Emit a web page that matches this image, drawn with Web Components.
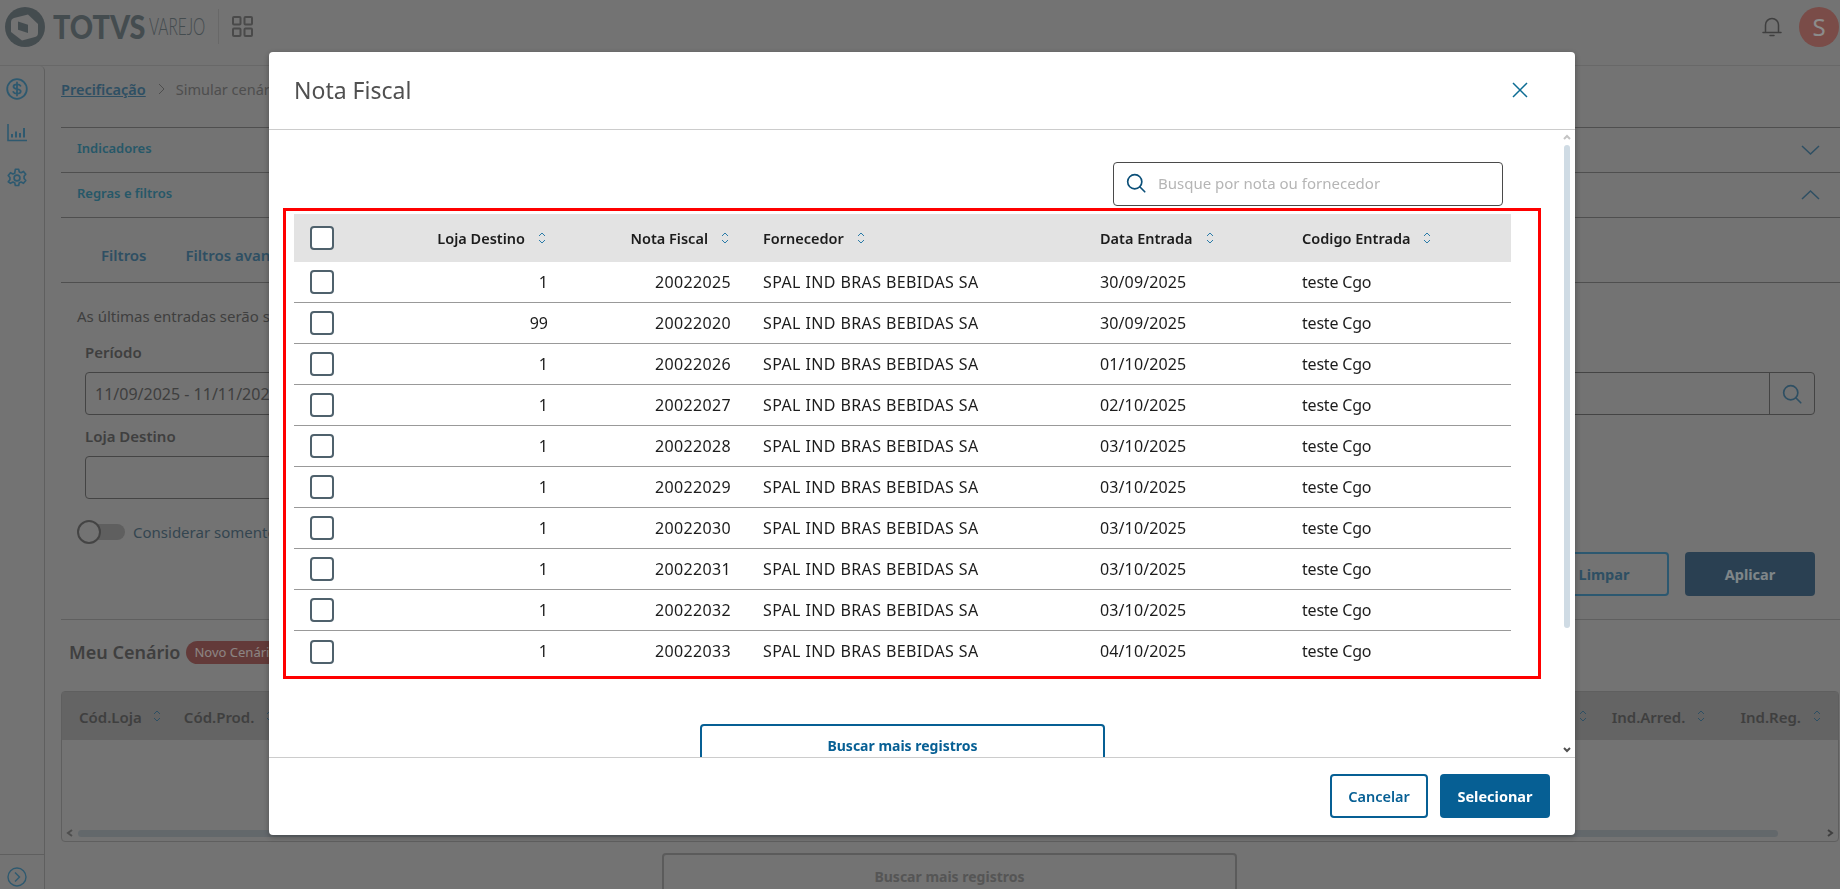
<!DOCTYPE html>
<html lang="pt-BR">
<head>
<meta charset="utf-8">
<title>Nota Fiscal</title>
<style>
  html, body { margin: 0; height: 100%; overflow: hidden; }
  body { background: #d1d1d1; color: #747474; font-family: "Noto Sans", "Liberation Sans", sans-serif; font-size: 14px; }
  app-page { height: 889px; }
</style>
</head>
<body>
<app-page>
  <app-header slot="header"></app-header>
  <app-sidebar slot="side"></app-sidebar>
  <bread-crumb></bread-crumb>
  <accordion-row label="Indicadores"></accordion-row>
  <accordion-row label="Regras e filtros" open></accordion-row>
  <filter-panel></filter-panel>
  <scenario-section></scenario-section>
</app-page>
<modal-overlay></modal-overlay>
<modal-dialog heading="Nota Fiscal">
  <search-box placeholder="Busque por nota ou fornecedor"></search-box>
  <nf-table>
    <nf-row loja="1" nota="20022025" forn="SPAL IND BRAS BEBIDAS SA" data="30/09/2025" cod="teste Cgo"></nf-row>
    <nf-row loja="99" nota="20022020" forn="SPAL IND BRAS BEBIDAS SA" data="30/09/2025" cod="teste Cgo"></nf-row>
    <nf-row loja="1" nota="20022026" forn="SPAL IND BRAS BEBIDAS SA" data="01/10/2025" cod="teste Cgo"></nf-row>
    <nf-row loja="1" nota="20022027" forn="SPAL IND BRAS BEBIDAS SA" data="02/10/2025" cod="teste Cgo"></nf-row>
    <nf-row loja="1" nota="20022028" forn="SPAL IND BRAS BEBIDAS SA" data="03/10/2025" cod="teste Cgo"></nf-row>
    <nf-row loja="1" nota="20022029" forn="SPAL IND BRAS BEBIDAS SA" data="03/10/2025" cod="teste Cgo"></nf-row>
    <nf-row loja="1" nota="20022030" forn="SPAL IND BRAS BEBIDAS SA" data="03/10/2025" cod="teste Cgo"></nf-row>
    <nf-row loja="1" nota="20022031" forn="SPAL IND BRAS BEBIDAS SA" data="03/10/2025" cod="teste Cgo"></nf-row>
    <nf-row loja="1" nota="20022032" forn="SPAL IND BRAS BEBIDAS SA" data="03/10/2025" cod="teste Cgo"></nf-row>
    <nf-row loja="1" nota="20022033" forn="SPAL IND BRAS BEBIDAS SA" data="04/10/2025" cod="teste Cgo" last></nf-row>
  </nf-table>
</modal-dialog>

<script>
// icones usados em mais de um componente
const sortIcon = (color) => `<svg width="8" height="14" viewBox="0 0 8 14" fill="none" stroke="${color}" stroke-width="1" style="flex:none"><path d="M1 5 4 2l3 3M1 9l3 3 3-3"/></svg>`;
const lupa = (color, size) => `<svg width="${size}" height="${size}" viewBox="0 0 24 24" fill="none" stroke="${color}" stroke-width="2"><circle cx="10.5" cy="10.5" r="8.5"/><path d="m16.5 16.5 6 6" stroke-linecap="round"/></svg>`;

class AppPage extends HTMLElement {
  constructor(){
    super();
    this.attachShadow({mode: 'open'});
    this.shadowRoot.innerHTML = `
      <style>
        :host{ display:flex; flex-direction:column; overflow:hidden; }
        .body{ display:flex; flex:1; min-height:0; }
        main{ flex:1; min-width:0; padding-left:16px; }
      </style>
      <slot name="header"></slot>
      <div class="body">
        <slot name="side"></slot>
        <main><slot></slot></main>
      </div>`;
  }
}

class AppHeader extends HTMLElement {
  constructor(){
    super();
    this.attachShadow({mode: 'open'});
    this.shadowRoot.innerHTML = `
      <style>
        :host{ display:flex; align-items:center; height:66px; box-sizing:border-box; padding-bottom:12px; border-bottom:1px solid #bdbdbd; flex:none; }
        .logo{ margin-left:5px; flex:none; }
        .totvs{ margin-left:8px; width:88px; white-space:nowrap; font:900 32px/1 Lato, sans-serif; color:#7d8a91; transform:scaleX(.9); transform-origin:left center; }
        .varejo{ margin-left:8px; width:57px; white-space:nowrap; font:300 23px/1 Lato, sans-serif; color:#7d8a91; transform:scaleX(.67); transform-origin:left center; }
        .div{ width:1px; height:35px; background:#bdbdbd; margin-left:12px; }
        .grid{ margin-left:13px; }
        .right{ margin-left:auto; display:flex; align-items:center; gap:17px; padding-right:1px; }
        .avatar{ width:40px; height:40px; border-radius:50%; background:#de8a83; color:#fff; font-size:24px; display:flex; align-items:center; justify-content:center; }
      </style>
      <svg class="logo" width="40" height="40" viewBox="0 0 40 40">
        <circle cx="20" cy="20" r="20" fill="#7d8a91"/>
        <path d="M6 25V15q0-3 3-4l14-3.500 10 9.500v9q0 3-3 4l-13 3.500z" fill="#d1d1d1"/>
        <path d="M13 14.500 23 17.700V26L13 22.700z" fill="#7d8a91"/>
      </svg>
      <span class="totvs">TOTVS</span>
      <span class="varejo">VAREJO</span>
      <span class="div"></span>
      <svg class="grid" width="21" height="21" viewBox="0 0 21 21" fill="none" stroke="#878787" stroke-width="2"><rect x="1" y="1" width="7.500" height="7.500" rx="1"/><rect x="12.500" y="1" width="7.500" height="7.500" rx="1"/><rect x="1" y="12.500" width="7.500" height="7.500" rx="1"/><rect x="12.500" y="12.500" width="7.500" height="7.500" rx="1"/></svg>
      <div class="right">
        <svg width="20" height="21" viewBox="0 0 20 21" fill="none" stroke="#747474" stroke-width="1.500"><path d="M1 16.500h18M3.500 16.500V9a6.500 6.500 0 0 1 13 0v7.500M8 19.500h4" stroke-linecap="round"/></svg>
        <div class="avatar">S</div>
      </div>`;
  }
}

class AppSidebar extends HTMLElement {
  constructor(){
    super();
    this.attachShadow({mode: 'open'});
    this.shadowRoot.innerHTML = `
      <style>
        :host{ display:flex; flex-direction:column; align-items:center; width:45px; padding-right:11px; box-sizing:border-box; height:823px; flex:none; border-right:1px solid #adadad; border-top-right-radius:5px; }
        svg{ display:block; flex:none; }
        .a{ margin-top:12px; } .b{ margin-top:24px; } .c{ margin-top:26px; }
        .foot{ margin-top:auto; align-self:stretch; margin-right:-11px; padding:9px 11px 0 0; height:35px; box-sizing:border-box; border-top:1px solid #adadad; display:flex; justify-content:center; align-items:center; }
      </style>
      <svg class="a" width="22" height="22" viewBox="0 0 22 22" fill="none" stroke="#55a3cb" stroke-width="1.800"><circle cx="11" cy="11" r="9.800"/><path d="M14.500 7.800c-.5-1-1.800-1.500-3.500-1.500-2 0-3.500.9-3.500 2.400 0 3.300 7.200 1.400 7.200 4.600 0 1.500-1.500 2.400-3.700 2.400-1.800 0-3.200-.7-3.700-1.800M11 4.500v13" stroke-linecap="round"/></svg>
      <svg class="b" width="20" height="18" viewBox="0 0 20 18" fill="none" stroke="#55a3cb" stroke-width="1.600"><path d="M1 0v16.500h19"/><path d="M5 10v3.500M9 7.500v6M13 9v4.500M17 4v9.500" stroke-width="2"/></svg>
      <svg class="c" width="20" height="20" viewBox="0 0 24 24" fill="none" stroke="#55a3cb" stroke-width="2" stroke-linejoin="round"><circle cx="12" cy="12" r="3.500"/><path d="M10 1.500h4l.7 3.200 2.200 1 2.900-1.600 2.700 3.400-2 2.500v2.500l2 2.500-2.700 3.400-2.900-1.600-2.200 1-.7 3.200h-4l-.7-3.200-2.200-1-2.900 1.600L1.500 16.500l2-2.500v-2.500l-2-2.500 2.700-3.400 2.900 1.600 2.200-1z"/></svg>
      <div class="foot">
        <svg width="20" height="20" viewBox="0 0 20 20" fill="none" stroke="#55a3cb" stroke-width="1.400"><circle cx="10" cy="10" r="9"/><path d="m8 5.500 4.500 4.500L8 14.500"/></svg>
      </div>`;
  }
}

class BreadCrumb extends HTMLElement {
  constructor(){
    super();
    this.attachShadow({mode: 'open'});
    this.shadowRoot.innerHTML = `
      <style>
        :host{ display:flex; align-items:center; height:61px; font-size:14.500px; padding-bottom:16px; box-sizing:border-box; }
        a{ color:#5590b4; text-decoration:underline; font-weight:600; }
        svg{ margin:0 10px 0 12px; }
        span{ color:#8e8e8e; }
      </style>
      <a>Precificação</a>
      <svg width="8" height="12" viewBox="0 0 8 12" fill="none" stroke="#8e8e8e"><path d="m1 1 5 5-5 5"/></svg>
      <span>Simular cenário</span>`;
  }
}

class AccordionRow extends HTMLElement {
  constructor(){
    super();
    this.attachShadow({mode: 'open'});
  }
  connectedCallback(){
    const chevron = this.hasAttribute('open') ? 'M1 10 9.500 2 18 10' : 'M1 2l8.500 8L18 2';
    this.shadowRoot.innerHTML = `
      <style>
        :host{ display:flex; align-items:center; justify-content:space-between; height:45px; box-sizing:border-box; border-top:1px solid #919191; padding:0 20px 0 16px; }
        span{ color:#46a0be; font-size:13px; font-weight:600; margin-bottom:5px; }
      </style>
      <span>${this.getAttribute('label')}</span>
      <svg width="19" height="12" viewBox="0 0 19 12" fill="none" stroke="#5590b4" stroke-width="1.500"><path d="${chevron}"/></svg>`;
  }
}

class FilterPanel extends HTMLElement {
  constructor(){
    super();
    this.attachShadow({mode: 'open'});
    this.shadowRoot.innerHTML = `
      <style>
        :host{ display:block; border-top:1px solid #919191; height:403px; box-sizing:border-box; border-bottom:1px solid #adadad; }
        .tabs{ display:flex; height:65px; box-sizing:border-box; border-bottom:1px solid #919191; padding:9px 0 0 40px; gap:39px; align-items:center; color:#5590b4; font-size:15px; font-weight:600; }
        .hint{ margin:23px 0 0 16px; line-height:20px; font-size:15px; color:#747474; }
        .form{ padding:0 25px 0 24px; }
        label{ display:block; margin-top:16px; height:20px; line-height:20px; font-weight:600; font-size:15px; color:#747474; }
        .row + label{ margin-top:11px; }
        .row{ display:flex; gap:20px; margin-top:10px; }
        .field{ height:43px; box-sizing:border-box; border:1px solid #7d7d7d; border-radius:4px; width:620px; display:flex; align-items:center; padding-left:9px; font-size:16px; color:#747474; }
        .field.r{ flex:1; width:auto; padding:0; justify-content:flex-end; }
        .field.r div{ width:44px; height:100%; border-left:1px solid #7d7d7d; display:flex; align-items:center; justify-content:center; }
        .toggle{ display:flex; align-items:center; margin:21px 0 0 16px; height:24px; color:#5f7f93; font-size:15px; }
        .track{ width:48px; height:24px; position:relative; margin-right:8px; }
        .track::before{ content:""; position:absolute; left:13px; right:0; top:4px; bottom:4px; border-radius:8px; background:#adadad; }
        .track::after{ content:""; position:absolute; left:0; top:0; width:24px; height:24px; box-sizing:border-box; border:2px solid #7d7d7d; border-radius:50%; background:#d1d1d1; }
        .btns{ display:flex; justify-content:flex-end; gap:16px; padding-right:25px; margin-top:8px; }
        .btn{ width:130px; height:44px; box-sizing:border-box; border-radius:4px; display:flex; align-items:center; justify-content:center; font-size:14.500px; font-weight:700; }
        .o{ border:2px solid #50a0cc; color:#5590b4; }
        .f{ background:#4e7695; color:#e8f4fa; }
      </style>
      <div class="tabs"><span>Filtros</span><span>Filtros avançados</span></div>
      <div class="hint">As últimas entradas serão s</div>
      <div class="form">
        <label>Período</label>
        <div class="row">
          <div class="field">11/09/2025 - 11/11/2025</div>
          <div class="field r"><div>${lupa('#5590b4', 20)}</div></div>
        </div>
        <label>Loja Destino</label>
        <div class="row"><div class="field"></div></div>
      </div>
      <div class="toggle"><span class="track"></span>Considerar somente</div>
      <div class="btns"><div class="btn o">Limpar</div><div class="btn f">Aplicar</div></div>`;
  }
}

class ScenarioSection extends HTMLElement {
  constructor(){
    super();
    this.attachShadow({mode: 'open'});
    const s = sortIcon('#5590b4');
    this.shadowRoot.innerHTML = `
      <style>
        :host{ display:block; }
        .title{ display:flex; align-items:center; height:71px; box-sizing:border-box; padding:0 0 7px 8px; }
        h2{ margin:0; font-size:18px; font-weight:600; color:#747474; }
        .badge{ margin-left:6px; height:23px; padding:0 14px 0 8px; border-radius:12px; background:#b46b68; color:#fff0ee; font-size:13px; line-height:23px; }
        .table{ border:1px solid #adadad; border-radius:4px; height:151px; box-sizing:border-box; position:relative; margin-right:1px; }
        .head{ height:48px; background:#b6b6b6; display:flex; align-items:center; font-size:15px; font-weight:600; color:#747474; padding-top:1px; box-sizing:border-box; }
        .bar{ position:absolute; left:0; right:0; bottom:4px; height:8px; display:flex; align-items:center; }
        .thumb{ margin-left:16px; height:7px; width:1700px; border-radius:4px; background:#b4bdc4; }
        .arrow{ position:absolute; top:0; width:8px; height:8px; }
        .btn{ margin:11px 0 0 601px; width:575px; height:48px; box-sizing:border-box; border:2px solid #a6a6a6; border-radius:4px; display:flex; align-items:center; justify-content:center; color:#9c9c9c; font-weight:700; font-size:14px; padding-bottom:2px; }
      </style>
      <div class="title"><h2>Meu Cenário</h2><span class="badge">Novo Cenário</span></div>
      <div class="table">
        <div class="head">
          <span style="margin-left:17px">Cód.Loja</span><span style="margin-left:11px">${s}</span>
          <span style="margin-left:23px">Cód.Prod.</span><span style="margin-left:12px">${s}</span>
          <span style="margin:0 25px 0 auto">${s}</span>
          <span style="margin-right:12px">Ind.Arred.</span><span style="margin-right:35px">${s}</span>
          <span style="margin-right:12px">Ind.Reg.</span><span style="margin-right:17px">${s}</span>
        </div>
        <div class="bar">
          <svg class="arrow" style="left:4px" viewBox="0 0 8 8" fill="none" stroke="#8e8e8e" stroke-width="2"><path d="M6 1 2 4l4 3"/></svg>
          <div class="thumb"></div>
          <svg class="arrow" style="right:4px" viewBox="0 0 8 8" fill="none" stroke="#747474" stroke-width="2"><path d="m2 1 4 3-4 3"/></svg>
        </div>
      </div>
      <div class="btn">Buscar mais registros</div>`;
  }
}

class ModalOverlay extends HTMLElement {
  constructor(){
    super();
    this.attachShadow({mode: 'open'});
    this.shadowRoot.innerHTML = `<style>:host{ position:fixed; inset:0; background:rgba(0,0,0,.45); }</style>`;
  }
}

class ModalDialog extends HTMLElement {
  constructor(){
    super();
    this.attachShadow({mode: 'open'});
  }
  connectedCallback(){
    this.shadowRoot.innerHTML = `
      <style>
        :host{ position:fixed; left:269px; top:52px; width:1306px; height:783px; background:#fff; border-radius:4px; box-shadow:0 2px 6px rgba(0,0,0,.3); display:flex; flex-direction:column; color:#1c1c1c; overflow:hidden; }
        header{ height:78px; flex:none; box-sizing:border-box; border-bottom:1px solid #ccc; display:flex; align-items:center; justify-content:space-between; padding:0 47px 2px 25px; }
        h1{ margin:0; font-size:23px; font-weight:400; color:#505050; }
        .content{ flex:1; min-height:0; overflow:hidden; padding:32px 0 0 14px; position:relative; }
        .btn-more{ margin:45px 0 0 417px; width:405px; height:48px; box-sizing:border-box; border:2px solid #065f94; border-radius:4px; display:flex; align-items:center; justify-content:center; font-size:14px; font-weight:700; color:#065f94; padding-bottom:6px; }
        .track{ position:absolute; right:5px; top:0; bottom:0; width:6px; }
        .thumb{ position:absolute; left:0; right:0; top:15px; height:483px; background:#cfdbe4; border-radius:3px; }
        .track svg{ position:absolute; left:-1px; }
        footer{ height:78px; flex:none; box-sizing:border-box; border-top:1px solid #ccc; display:flex; align-items:center; justify-content:flex-end; gap:12px; padding:0 25px 2px 0; }
        .btn{ height:44px; box-sizing:border-box; border-radius:4px; display:flex; align-items:center; justify-content:center; font-size:14.500px; }
        .cancel{ width:98px; border:2px solid #065f94; color:#065f94; font-weight:600; }
        .ok{ width:110px; background:#065f94; color:#fff; font-weight:700; }
      </style>
      <header>
        <h1>${this.getAttribute('heading')}</h1>
        <svg width="16" height="16" viewBox="0 0 16 16" fill="none" stroke="#0c6c94" stroke-width="1.500"><path d="m1 1 14 14M15 1 1 15"/></svg>
      </header>
      <div class="content">
        <slot></slot>
        <div class="btn-more">Buscar mais registros</div>
        <div class="track">
          <svg style="top:4px" width="8" height="6" viewBox="0 0 8 6" fill="none" stroke="#c4c4c4" stroke-width="2"><path d="m1 5 3-3 3 3"/></svg>
          <div class="thumb"></div>
          <svg style="bottom:4px" width="8" height="6" viewBox="0 0 8 6" fill="none" stroke="#505050" stroke-width="2"><path d="m1 1 3 3 3-3"/></svg>
        </div>
      </div>
      <footer><div class="btn cancel">Cancelar</div><div class="btn ok">Selecionar</div></footer>`;
  }
}

class SearchBox extends HTMLElement {
  constructor(){
    super();
    this.attachShadow({mode: 'open'});
  }
  connectedCallback(){
    this.shadowRoot.innerHTML = `
      <style>
        :host{ display:flex; align-items:center; gap:12px; width:390px; height:44px; margin:0 0 2px 830px; box-sizing:border-box; border:1px solid #4a4a4a; border-radius:4px; padding:0 0 2px 12px; color:#b5b5b5; font-size:15px; }
      </style>
      ${lupa('#0b4f78', 20)}
      <span>${this.getAttribute('placeholder')}</span>`;
  }
}

class CheckBox extends HTMLElement {
  constructor(){
    super();
    this.attachShadow({mode: 'open'});
    this.shadowRoot.innerHTML = `<style>:host{ display:block; width:24px; height:24px; box-sizing:border-box; border:2px solid #4f616c; border-radius:4px; background:#fff; }</style>`;
  }
}

const NF_COLS = 'grid-template-columns:62px 192px 183px 369px 202px 1fr;';

class NfTable extends HTMLElement {
  constructor(){
    super();
    this.attachShadow({mode: 'open'});
    const s = sortIcon('#2a7ba8');
    this.shadowRoot.innerHTML = `
      <style>
        :host{ display:block; width:1258px; height:471px; box-sizing:border-box; border:3px solid #f00; padding:3px 27px 4px 8px; }
        .head{ display:grid; ${NF_COLS} height:48px; background:#e3e3e3; align-items:center; font-size:14.500px; font-weight:600; color:#1c1c1c; }
        check-box{ margin-left:16px; }
        .cell{ display:flex; align-items:center; gap:13px; padding-bottom:1px; }
        .end{ justify-content:flex-end; padding-right:2px; }
        .pad{ padding-left:32px; }
      </style>
      <div class="head">
        <check-box></check-box>
        <div class="cell end"><span>Loja Destino</span>${s}</div>
        <div class="cell end"><span>Nota Fiscal</span>${s}</div>
        <div class="cell pad"><span>Fornecedor</span>${s}</div>
        <div class="cell"><span>Data Entrada</span>${s}</div>
        <div class="cell"><span>Codigo Entrada</span>${s}</div>
      </div>
      <slot></slot>`;
  }
}

class NfRow extends HTMLElement {
  constructor(){
    super();
    this.attachShadow({mode: 'open'});
  }
  connectedCallback(){
    const line = this.hasAttribute('last') ? '' : 'border-bottom:1px solid #999;';
    this.shadowRoot.innerHTML = `
      <style>
        :host{ display:grid; ${NF_COLS} height:41px; box-sizing:border-box; align-items:center; font-size:16px; color:#1c1c1c; ${line} }
        check-box{ margin-left:16px; }
        div{ padding-bottom:1px; }
        .end{ text-align:right; }
        .num{ letter-spacing:.35px; }
        .date{ letter-spacing:.12px; }
        .pad{ padding-left:32px; letter-spacing:.4px; }
        .cod{ letter-spacing:-.2px; }
      </style>
      <check-box></check-box>
      <div class="end">${this.getAttribute('loja')}</div>
      <div class="end num">${this.getAttribute('nota')}</div>
      <div class="pad">${this.getAttribute('forn')}</div>
      <div class="date">${this.getAttribute('data')}</div>
      <div class="cod">${this.getAttribute('cod')}</div>`;
  }
}

customElements.define('app-page', AppPage);
customElements.define('app-header', AppHeader);
customElements.define('app-sidebar', AppSidebar);
customElements.define('bread-crumb', BreadCrumb);
customElements.define('accordion-row', AccordionRow);
customElements.define('filter-panel', FilterPanel);
customElements.define('scenario-section', ScenarioSection);
customElements.define('modal-overlay', ModalOverlay);
customElements.define('modal-dialog', ModalDialog);
customElements.define('search-box', SearchBox);
customElements.define('check-box', CheckBox);
customElements.define('nf-table', NfTable);
customElements.define('nf-row', NfRow);
</script>
</body>
</html>
